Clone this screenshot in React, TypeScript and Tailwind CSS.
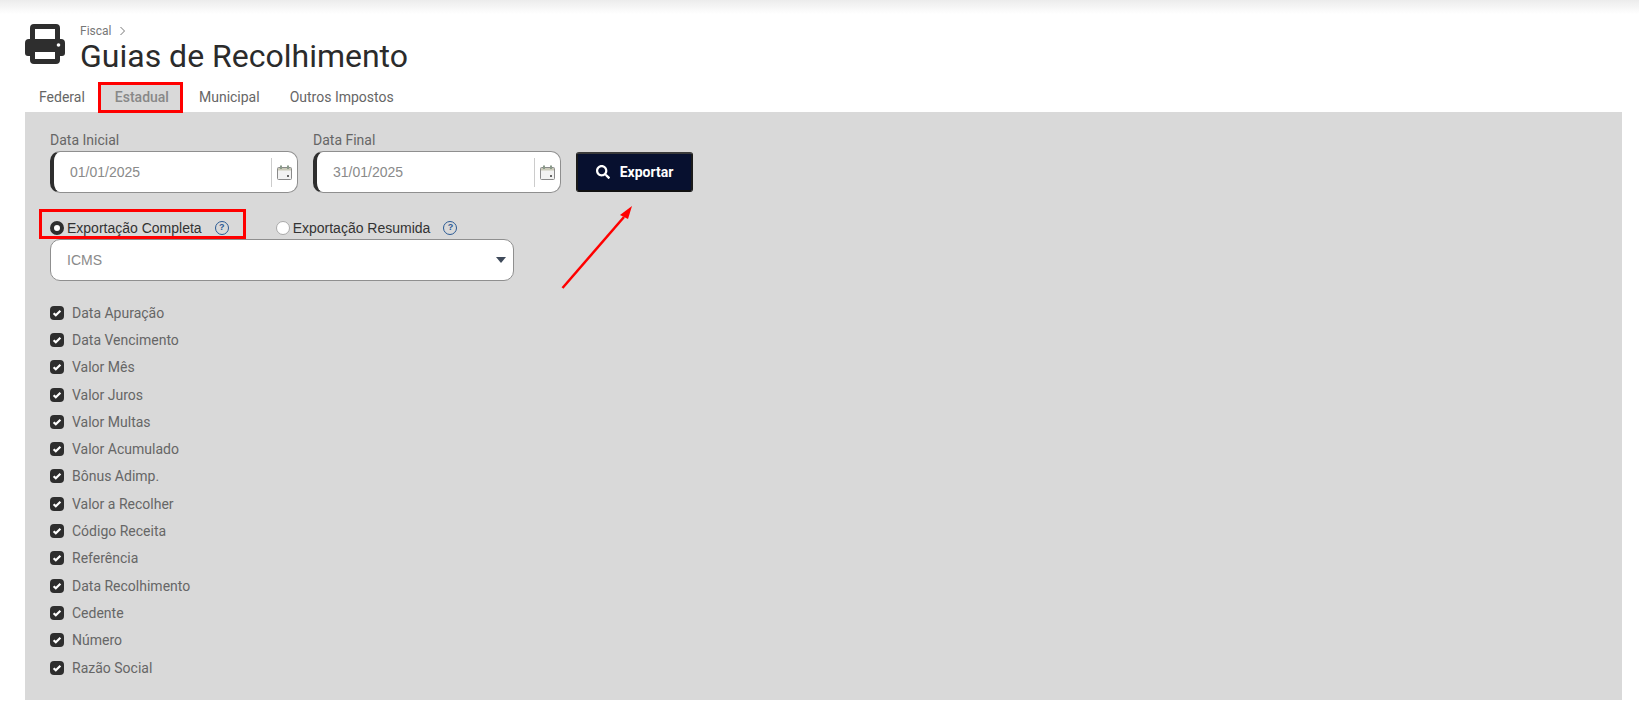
import { FaSearch } from 'react-icons/fa';

const campos = [
  'Data Apuração',
  'Data Vencimento',
  'Valor Mês',
  'Valor Juros',
  'Valor Multas',
  'Valor Acumulado',
  'Bônus Adimp.',
  'Valor a Recolher',
  'Código Receita',
  'Referência',
  'Data Recolhimento',
  'Cedente',
  'Número',
  'Razão Social',
];

function PrinterIcon() {
  return (
    <svg className="shrink-0" width="40" height="40" viewBox="0 0 40 40" fill="none">
      <path d="M5 16V4a4 4 0 0 1 4-4h22a4 4 0 0 1 4 4v12h-5V5H10v11z" fill="#2e2e2e" />
      <path d="M4 15h32a4 4 0 0 1 4 4v10a3 3 0 0 1-3 3h-2v4a4 4 0 0 1-4 4H9a4 4 0 0 1-4-4v-4H3a3 3 0 0 1-3-3V19a4 4 0 0 1 4-4z" fill="#2e2e2e" />
      <rect x="10" y="28" width="20" height="7" fill="#fff" />
      <circle cx="33.5" cy="21" r="1.8" fill="#fff" />
    </svg>
  );
}

function CalendarIcon() {
  return (
    <svg width="15" height="15" viewBox="0 0 15 15" fill="none">
      <rect x="0.5" y="2.5" width="14" height="12" rx="1" fill="#f2f2f2" stroke="#8a8a8a" />
      <rect x="1" y="3" width="13" height="2.5" fill="#c9c9b8" />
      <rect x="3" y="0.5" width="2" height="3.5" fill="#8a9a8a" />
      <rect x="10" y="0.5" width="2" height="3.5" fill="#8a9a8a" />
      <rect x="10" y="10" width="2" height="2" fill="#666" />
    </svg>
  );
}

function CheckIcon() {
  return (
    <svg className="shrink-0" width="14" height="14" viewBox="0 0 14 14" fill="none">
      <rect width="14" height="14" rx="4" fill="#2e2e2e" />
      <path d="M3.6 7.2l2.2 2.1 4.6-4.5" stroke="#fff" strokeWidth="2.2" />
    </svg>
  );
}

function DateField({ label, value }: { label: string; value: string }) {
  return (
    <div className="flex w-[248px] flex-col">
      <label className="h-[21px] text-sm leading-[20px] text-[#666]">{label}</label>
      <div className="flex h-[42px] items-center rounded-[10px] border border-[#8f8f8f] border-l-[4px] border-l-[#2e2e2e] bg-white">
        <span className="flex-1 pl-[16px] font-['Liberation_Sans',sans-serif] text-sm text-[#8a8a8a]">{value}</span>
        <span className="mr-[5px] flex h-[29px] items-center border-l border-[#ccc] pl-[5px]">
          <CalendarIcon />
        </span>
      </div>
    </div>
  );
}

function HelpIcon() {
  return (
    <span className="flex h-[14px] w-[14px] items-center justify-center rounded-full border-[1.5px] border-[#2a5a94] text-[9px] leading-none font-bold text-[#2a5a94]">
      ?
    </span>
  );
}

export default function App() {
  return (
    <div className="relative min-h-[728px] bg-white font-['Roboto',sans-serif]">
      <div className="h-[14px] bg-gradient-to-b from-[#ececec] to-white" />

      <div className="flex pl-[25px] pt-[10px]">
        <PrinterIcon />
        <div className="ml-[15px]">
          <div className="flex h-[14px] items-center text-xs text-[#777]">
            Fiscal
            <svg className="ml-[8px]" width="7" height="10" viewBox="0 0 7 10" fill="none" stroke="#777" strokeWidth="1">
              <path d="M1.5 1l4 4-4 4" />
            </svg>
          </div>
          <h1 className="text-[32px] leading-[36px] text-[#2b2b2b]">Guias de Recolhimento</h1>
        </div>
      </div>

      <div className="mt-[8px] flex h-[30px] items-center pl-[25px] text-sm text-[#666]">
        <span className="px-[14px]">Federal</span>
        <span className="flex h-[30px] items-center bg-[#d9d9d9] pl-[16px] pr-[14px] font-medium text-[#888]">Estadual</span>
        <span className="px-[16px]">Municipal</span>
        <span className="px-[14px]">Outros Impostos</span>
      </div>

      <div className="ml-[25px] mr-[17px] h-[588px] bg-[#d9d9d9] pl-[25px] pt-[18px]">
        <div className="flex items-end">
          <DateField label="Data Inicial" value="01/01/2025" />
          <div className="ml-[15px]">
            <DateField label="Data Final" value="31/01/2025" />
          </div>
          <button className="ml-[15px] mb-[1px] flex h-[40px] w-[117px] items-center justify-center gap-[10px] rounded-[3px] border-2 border-t-[#3a3a3a] border-x-[#1a1a1a] border-b-[#111] bg-[#07102f] text-sm font-bold text-white">
            <FaSearch className="text-[14px]" />
            Exportar
          </button>
        </div>

        <div className="mt-[22px] flex h-[25px] items-center font-['Liberation_Sans',sans-serif] text-sm text-[#333]">
          <span className="h-[14px] w-[14px] rounded-full border-[4px] border-[#2e2e2e] bg-white" />
          <span className="ml-[3px]">Exportação Completa</span>
          <span className="ml-[13px]"><HelpIcon /></span>
          <span className="ml-[47px] h-[14px] w-[14px] rounded-full border border-[#aaa] bg-white" />
          <span className="ml-[3px]">Exportação Resumida</span>
          <span className="ml-[13px]"><HelpIcon /></span>
        </div>

        <div className="relative mt-[-1px] flex h-[42px] w-[464px] items-center rounded-[10px] border border-[#8f8f8f] bg-white pl-[16px] font-['Liberation_Sans',sans-serif] text-sm text-[#8a8a8a]">
          ICMS
          <span className="absolute right-[7px] top-[17px] h-0 w-0 border-x-[5px] border-t-[6px] border-x-transparent border-t-[#3f4a5a]" />
        </div>

        <div className="mt-[18px] flex flex-col">
          {campos.map(campo => (
            <div key={campo} className="flex h-[27.3px] items-center text-sm text-[#666]">
              <CheckIcon />
              <span className="ml-[8px]">{campo}</span>
            </div>
          ))}
        </div>
      </div>

      {/* anotacoes em vermelho */}
      <div className="absolute left-[98px] top-[82px] h-[31px] w-[85px] border-[3px] border-[#ff0000]" />
      <div className="absolute left-[39px] top-[209px] h-[30px] w-[207px] border-[3px] border-[#ff0000]" />
      <svg className="absolute left-[555px] top-[200px]" width="85" height="95" viewBox="0 0 85 95" fill="none">
        <path d="M7.5 88L69 17" stroke="#ff0000" strokeWidth="2.5" />
        <path d="M77 6L73 19 65 15z" fill="#ff0000" />
      </svg>
    </div>
  );
}
